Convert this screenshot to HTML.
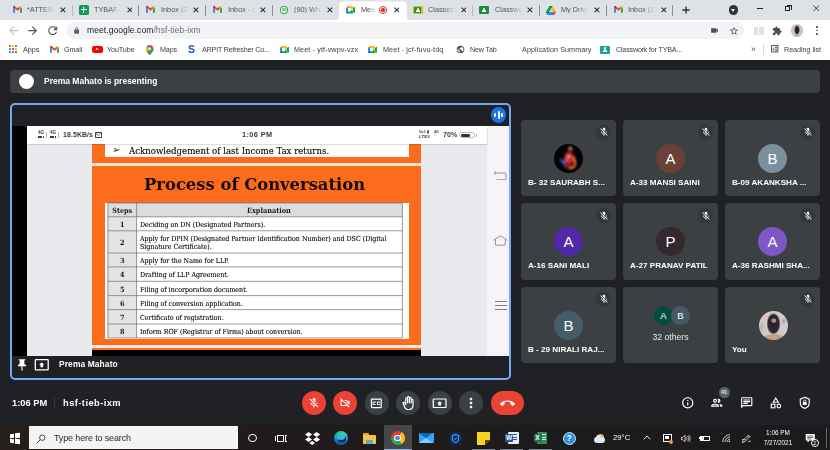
<!DOCTYPE html>
<html lang="en">
<head>
<meta charset="utf-8">
<title>Meet</title>
<style>
*{box-sizing:border-box;margin:0;padding:0}
html,body{width:830px;height:450px;overflow:hidden;background:#202124}
body{position:relative;font-family:"Liberation Sans",sans-serif;color:#fff;-webkit-font-smoothing:antialiased}
.a{position:absolute}
.t{position:absolute;white-space:nowrap;line-height:1;will-change:transform}
/* chrome */
#tabbar{left:0;top:0;width:830px;height:20px;background:#dee1e6}
#toolbar{left:0;top:20px;width:830px;height:20px;background:#fff}
#bmbar{left:0;top:40px;width:830px;height:20px;background:#fff}
.tabt{font-size:7.3px;color:#4a4d51;top:6px}
.tsep{width:1px;height:11px;top:5px;background:#8a8d91}
.tx{font-size:8px;color:#33363a;top:5px;font-weight:bold}
.bm{font-size:7.4px;color:#3c4043;top:46px}
/* meet */
#banner{left:10px;top:70px;width:810px;height:23px;background:#3c4043;border-radius:4px}
#frame{left:10px;top:103px;width:501px;height:276.5px;border:2px solid #7aa7f3;border-radius:5px;background:#202124;overflow:hidden}
.tile{width:95px;height:76px;background:#3c4043;border-radius:4px}
.nm{font-weight:bold;font-size:8.1px;color:#fff;left:7.3px;top:58.5px}
.av{width:29px;height:29px;border-radius:50%;left:33px;top:23.700px;text-align:center;font-size:15px;line-height:29px;color:#fff}
.mu{width:15px;height:15px;border-radius:50%;background:#34363a;left:75px;top:4.8px}
.cb{width:24px;height:24px;border-radius:50%;background:#3c4043;top:391px}
.red{background:#ea4335}
/* slide */
.sf{font-family:"DejaVu Serif Condensed","DejaVu Serif",serif;color:#1a1a1a}
.row{left:97px;width:295.5px;border-top:1px solid #666;background:#fff}
.row i{position:absolute;left:0;top:0;bottom:0;width:29.5px;background:#e4e4e4;border-right:1px solid #666;font-style:normal;font-weight:bold;text-align:center;font-size:7.5px}
.rt2{text-shadow:0 0 0.3px rgba(0,0,0,.55)}
/* taskbar */
#taskbar{left:0;top:425px;width:830px;height:25px;background:linear-gradient(90deg,#261e1a 0,#1f1b1b 40%,#1b1a1c 100%)}
#search{left:29px;top:426px;width:209px;height:23px;background:#f4f4f4}
</style>
</head>
<body>
<!-- ===== Browser chrome ===== -->
<div class="a" id="tabbar"></div>
<div class="a" id="toolbar"></div>
<div class="a" id="bmbar"></div>
<svg class="a" style="left:12.5px;top:6.4px" width="9" height="6.75" viewBox="0 0 24 18"><path fill="#4285f4" d="M0 3v13.500C0 17.330.67 18 1.500 18H5.500V7.500L0 3z"/><path fill="#34a853" d="M18.500 18h4c.83 0 1.500-.67 1.500-1.500V3l-5.500 4.500V18z"/><path fill="#ea4335" d="M5.500 7.500V1.200L12 6.300l6.500-5.100v6.300L12 12.500z"/><path fill="#c5221f" d="M0 2.400V3l5.500 4.500V1.200L3.600.1C2.100-.9 0 .3 0 2.400z"/><path fill="#fbbc04" d="M24 2.400V3l-5.500 4.500V1.200L20.400.1C21.900-.9 24 .3 24 2.400z"/></svg>
<div class="t tabt" style="left:27.2px;width:30px;overflow:hidden;color:#50545a;-webkit-mask-image:linear-gradient(90deg,#000 50%,transparent 92%)">*ATTENC</div>
<svg class="a" style="left:59.8px;top:7.100px" width="5.800" height="5.800" viewBox="0 0 10 10"><path d="M1 1l8 8M9 1l-8 8" stroke="#2d3034" stroke-width="1.900" fill="none"/></svg>
<div class="a tsep" style="left:71.5px;background:#b9bcc1"></div>
<div class="a" style="left:78.5px;top:5px;width:10.500px;height:10px;border-radius:1.500px;background:#0f9d58"><div class="a" style="left:2.200px;top:4.300px;width:6.100px;height:1.100px;background:#fff"></div><div class="a" style="left:4.400px;top:2.200px;width:1.100px;height:5.800px;background:#fff"></div></div>
<div class="t tabt" style="left:94.0px;width:30px;overflow:hidden;color:#50545a;-webkit-mask-image:linear-gradient(90deg,#000 50%,transparent 92%)">TYBAF-A</div>
<svg class="a" style="left:126.6px;top:7.100px" width="5.800" height="5.800" viewBox="0 0 10 10"><path d="M1 1l8 8M9 1l-8 8" stroke="#2d3034" stroke-width="1.900" fill="none"/></svg>
<div class="a tsep" style="left:138.3px;background:#8a8d91"></div>
<svg class="a" style="left:146.1px;top:6.4px" width="9" height="6.75" viewBox="0 0 24 18"><path fill="#4285f4" d="M0 3v13.500C0 17.330.67 18 1.500 18H5.500V7.500L0 3z"/><path fill="#34a853" d="M18.500 18h4c.83 0 1.500-.67 1.500-1.500V3l-5.500 4.500V18z"/><path fill="#ea4335" d="M5.500 7.500V1.200L12 6.300l6.500-5.100v6.300L12 12.500z"/><path fill="#c5221f" d="M0 2.400V3l5.500 4.500V1.200L3.600.1C2.100-.9 0 .3 0 2.400z"/><path fill="#fbbc04" d="M24 2.400V3l-5.500 4.500V1.200L20.400.1C21.900-.9 24 .3 24 2.400z"/></svg>
<div class="t tabt" style="left:160.8px;width:30px;overflow:hidden;color:#50545a;-webkit-mask-image:linear-gradient(90deg,#000 50%,transparent 92%)">Inbox (2(</div>
<svg class="a" style="left:193.4px;top:7.100px" width="5.800" height="5.800" viewBox="0 0 10 10"><path d="M1 1l8 8M9 1l-8 8" stroke="#2d3034" stroke-width="1.900" fill="none"/></svg>
<div class="a tsep" style="left:205.0px;background:#8a8d91"></div>
<svg class="a" style="left:212.8px;top:6.4px" width="9" height="6.75" viewBox="0 0 24 18"><path fill="#4285f4" d="M0 3v13.500C0 17.330.67 18 1.500 18H5.500V7.500L0 3z"/><path fill="#34a853" d="M18.500 18h4c.83 0 1.500-.67 1.500-1.500V3l-5.500 4.500V18z"/><path fill="#ea4335" d="M5.500 7.500V1.200L12 6.300l6.500-5.100v6.300L12 12.500z"/><path fill="#c5221f" d="M0 2.400V3l5.500 4.500V1.200L3.600.1C2.100-.9 0 .3 0 2.400z"/><path fill="#fbbc04" d="M24 2.400V3l-5.500 4.500V1.200L20.400.1C21.900-.9 24 .3 24 2.400z"/></svg>
<div class="t tabt" style="left:227.5px;width:30px;overflow:hidden;color:#50545a;-webkit-mask-image:linear-gradient(90deg,#000 50%,transparent 92%)">Inbox - s</div>
<svg class="a" style="left:260.1px;top:7.100px" width="5.800" height="5.800" viewBox="0 0 10 10"><path d="M1 1l8 8M9 1l-8 8" stroke="#2d3034" stroke-width="1.900" fill="none"/></svg>
<div class="a tsep" style="left:271.8px;background:#8a8d91"></div>
<div class="a" style="left:279.9px;top:5.8px;width:8.400px;height:8.400px;border-radius:50%;background:#1fb141"><div class="a" style="left:1.300px;top:1.300px;width:5.800px;height:5.800px;border-radius:50%;background:#fff"></div><div class="t" style="left:1.800px;top:2.300px;font-size:4px;font-weight:bold;color:#159a36">90</div></div>
<div class="t tabt" style="left:294.3px;width:30px;overflow:hidden;color:#50545a;-webkit-mask-image:linear-gradient(90deg,#000 50%,transparent 92%)">(90) Wha</div>
<svg class="a" style="left:326.9px;top:7.100px" width="5.800" height="5.800" viewBox="0 0 10 10"><path d="M1 1l8 8M9 1l-8 8" stroke="#2d3034" stroke-width="1.900" fill="none"/></svg>
<svg class="a" style="left:336.1px;top:1px" width="73.8" height="19" viewBox="0 0 73.8 19"><path fill="#fff" d="M0 19 Q3 19 3 15.500 V4.500 Q3 0.500 7 0.500 H66.8 Q70.8 0.500 70.8 4.500 V15.500 Q70.8 19 73.8 19 Z"/></svg>
<svg class="a" style="left:346.3px;top:6.1px" width="9.2" height="7.543999999999999" viewBox="0 0 24 20"><path fill="#00832d" d="M17 10l2.300 2.700 3.200 2V3.600l-3.200 2.500z"/><path fill="#0066da" d="M0 14.500V18c0 1.100.9 2 2 2h3.500l.7-2.700-.7-2.800-2.700-.8z"/><path fill="#e94235" d="M5.500 0L0 5.500l2.800.8 2.700-.8.800-2.600z"/><path fill="#2684fc" d="M0 5.500h5.500v9H0z"/><path fill="#00ac47" d="M22.700 2.300L19 5.400v10.100l3.700 3c.6.400 1.300 0 1.300-.7V3c0-.7-.8-1.100-1.300-.7zM13 10v4.500H5.500V20H17c1.100 0 2-.9 2-2v-3.500z"/><path fill="#ffba00" d="M17 0H5.500v5.500H13V10l6-4.900V2c0-1.100-.9-2-2-2z"/></svg>
<div class="t tabt" style="left:361.1px;width:16px;overflow:hidden;color:#45494e;-webkit-mask-image:linear-gradient(90deg,#000 45%,transparent 95%)">Meet</div>
<div class="a" style="left:378.8px;top:5.900px;width:8px;height:8px;border-radius:50%;border:1px solid #d93025"><div class="a" style="left:1.200px;top:1.200px;width:3.600px;height:3.600px;border-radius:50%;background:#d93025"></div></div>
<svg class="a" style="left:393.7px;top:7.100px" width="5.800" height="5.800" viewBox="0 0 10 10"><path d="M1 1l8 8M9 1l-8 8" stroke="#2d3034" stroke-width="1.900" fill="none"/></svg>
<div class="a" style="left:412.7px;top:6.1px;width:10px;height:7.800px;border-radius:1px;background:#f4b400"><div class="a" style="left:1.200px;top:1.200px;width:7.600px;height:5.400px;background:#0f9d58"></div><div class="a" style="left:4px;top:2px;width:2px;height:2px;border-radius:50%;background:#fff"></div><div class="a" style="left:3px;top:4.300px;width:4px;height:1.500px;border-radius:1px 1px 0 0;background:#fff"></div></div>
<div class="t tabt" style="left:427.9px;width:30px;overflow:hidden;color:#50545a;-webkit-mask-image:linear-gradient(90deg,#000 50%,transparent 92%)">Classes</div>
<svg class="a" style="left:460.5px;top:7.100px" width="5.800" height="5.800" viewBox="0 0 10 10"><path d="M1 1l8 8M9 1l-8 8" stroke="#2d3034" stroke-width="1.900" fill="none"/></svg>
<div class="a tsep" style="left:472.1px;background:#b9bcc1"></div>
<div class="a" style="left:479.4px;top:6.1px;width:10px;height:7.800px;border-radius:1px;background:#1e8e3e"><div class="a" style="left:1.200px;top:1.200px;width:7.600px;height:5.400px;background:#1e8e3e"></div><div class="a" style="left:4px;top:2px;width:2px;height:2px;border-radius:50%;background:#fff"></div><div class="a" style="left:3px;top:4.300px;width:4px;height:1.500px;border-radius:1px 1px 0 0;background:#fff"></div></div>
<div class="t tabt" style="left:494.6px;width:30px;overflow:hidden;color:#50545a;-webkit-mask-image:linear-gradient(90deg,#000 50%,transparent 92%)">Classwor</div>
<svg class="a" style="left:527.2px;top:7.100px" width="5.800" height="5.800" viewBox="0 0 10 10"><path d="M1 1l8 8M9 1l-8 8" stroke="#2d3034" stroke-width="1.900" fill="none"/></svg>
<div class="a tsep" style="left:538.9px;background:#8a8d91"></div>
<svg class="a" style="left:546.2px;top:5.6px" width="10" height="9" viewBox="0 0 24 21"><path fill="#0066da" d="M1.800 18l1.100 1.900c.2.400.5.700.9.900L7.600 14H0c0 .4.100.9.300 1.300z"/><path fill="#00ac47" d="M12 6.700L8.200 0c-.4.200-.7.500-.9.900L.3 12.700c-.2.400-.3.800-.3 1.300h7.600z"/><path fill="#ea4335" d="M20.200 20.800c.4-.2.700-.5.900-.9l.5-.8 2.100-3.800c.2-.4.300-.8.300-1.300h-7.600l1.600 3.200z"/><path fill="#00832d" d="M12 6.700L15.800 0c-.4-.2-.8-.3-1.300-.3H9.500c-.5 0-.9.100-1.300.3z"/><path fill="#2684fc" d="M16.400 14H7.600l-3.800 6.800c.4.200.8.300 1.300.3h13.800c.5 0 .9-.1 1.300-.3z"/><path fill="#ffba00" d="M20.100 7.100L16.700.9c-.2-.4-.5-.7-.9-.9L12 6.700 16.400 14H24c0-.4-.1-.9-.3-1.300z"/></svg>
<div class="t tabt" style="left:561.4px;width:30px;overflow:hidden;color:#50545a;-webkit-mask-image:linear-gradient(90deg,#000 50%,transparent 92%)">My Drive</div>
<svg class="a" style="left:594.0px;top:7.100px" width="5.800" height="5.800" viewBox="0 0 10 10"><path d="M1 1l8 8M9 1l-8 8" stroke="#2d3034" stroke-width="1.900" fill="none"/></svg>
<div class="a tsep" style="left:605.7px;background:#8a8d91"></div>
<svg class="a" style="left:613.5px;top:6.4px" width="9" height="6.75" viewBox="0 0 24 18"><path fill="#4285f4" d="M0 3v13.500C0 17.330.67 18 1.500 18H5.500V7.500L0 3z"/><path fill="#34a853" d="M18.500 18h4c.83 0 1.500-.67 1.500-1.500V3l-5.500 4.500V18z"/><path fill="#ea4335" d="M5.500 7.500V1.200L12 6.300l6.500-5.100v6.300L12 12.500z"/><path fill="#c5221f" d="M0 2.400V3l5.500 4.500V1.200L3.600.1C2.100-.9 0 .3 0 2.400z"/><path fill="#fbbc04" d="M24 2.400V3l-5.500 4.500V1.200L20.400.1C21.900-.9 24 .3 24 2.400z"/></svg>
<div class="t tabt" style="left:628.2px;width:30px;overflow:hidden;color:#50545a;-webkit-mask-image:linear-gradient(90deg,#000 50%,transparent 92%)">Inbox (1(</div>
<svg class="a" style="left:660.8px;top:7.100px" width="5.800" height="5.800" viewBox="0 0 10 10"><path d="M1 1l8 8M9 1l-8 8" stroke="#2d3034" stroke-width="1.900" fill="none"/></svg>
<div class="a tsep" style="left:672.4px"></div>
<svg class="a" style="left:682px;top:6px" width="8" height="8" viewBox="0 0 10 10"><path d="M5 0.500v9M0.500 5h9" stroke="#2d3034" stroke-width="1.700" fill="none"/></svg>
<div class="a" style="left:728.500px;top:5.300px;width:9.600px;height:9.600px;border-radius:50%;background:#2f3237"><div class="a" style="left:2.300px;top:3.800px;width:0;height:0;border-left:2.500px solid transparent;border-right:2.500px solid transparent;border-top:3px solid #fff"></div></div>
<div class="a" style="left:757.400px;top:8px;width:6px;height:1px;background:#222"></div>
<div class="a" style="left:785.400px;top:6.400px;width:5px;height:5px;border:1px solid #222"></div><div class="a" style="left:786.900px;top:5px;width:5px;height:5px;border-top:1px solid #222;border-right:1px solid #222"></div>
<svg class="a" style="left:812.800px;top:5px" width="6.500" height="6.500" viewBox="0 0 10 10"><path d="M0.500 0.500l9 9M9.500 0.500l-9 9" stroke="#222" stroke-width="1.300" fill="none"/></svg>
<svg class="a" style="left:6.800px;top:23.900px" width="13.300" height="13.300" viewBox="0 0 24 24"><path fill="#bdc1c6" d="M20 11H7.830l5.590-5.590L12 4l-8 8 8 8 1.410-1.410L7.830 13H20v-2z"/></svg>
<svg class="a" style="left:26.200px;top:23.900px" width="13.300" height="13.300" viewBox="0 0 24 24"><path fill="#4d5156" d="M12 4l-1.410 1.410L16.170 11H4v2h12.170l-5.580 5.590L12 20l8-8z"/></svg>
<svg class="a" style="left:45.800px;top:23.600px" width="13.400" height="13.400" viewBox="0 0 24 24"><path fill="#4d5156" d="M17.650 6.350C16.200 4.900 14.210 4 12 4c-4.420 0-7.990 3.580-7.990 8s3.570 8 7.990 8c3.730 0 6.840-2.550 7.730-6h-2.080c-.82 2.330-3.040 4-5.650 4-3.310 0-6-2.690-6-6s2.690-6 6-6c1.660 0 3.140.69 4.220 1.780L13 11h7V4l-2.350 2.350z"/></svg>
<div class="a" style="left:66.300px;top:22px;width:678px;height:16.500px;border-radius:8.250px;background:#f1f3f4"></div>
<svg class="a" style="left:72.800px;top:26.500px" width="7.300" height="7.300" viewBox="0 0 24 24"><path fill="#5f6368" d="M18 8h-1V6c0-2.760-2.240-5-5-5S7 3.240 7 6v2H6c-1.100 0-2 .9-2 2v10c0 1.100.9 2 2 2h12c1.100 0 2-.9 2-2V10c0-1.100-.9-2-2-2zM9 6c0-1.660 1.340-3 3-3s3 1.340 3 3v2H9V6z"/></svg>
<div class="t" style="left:86.700px;top:26px;font-size:8.500px;color:#202124;letter-spacing:0.080px">meet.google.com<span style="color:#6b6f74">/hsf-tieb-ixm</span></div>
<svg class="a" style="left:709.700px;top:26px" width="9" height="9" viewBox="0 0 24 24"><path fill="#4d5156" d="M17 10.500V7c0-.55-.45-1-1-1H4c-.55 0-1 .45-1 1v10c0 .55.45 1 1 1h12c.55 0 1-.45 1-1v-3.500l4 4v-11l-4 4z"/></svg>
<svg class="a" style="left:729px;top:25.500px" width="10" height="10" viewBox="0 0 24 24"><path fill="#4d5156" d="M22 9.240l-7.190-.62L12 2 9.190 8.630 2 9.240l5.460 4.730L5.820 21 12 17.270 18.180 21l-1.630-7.030L22 9.240zM12 15.400l-3.760 2.270 1-4.280-3.320-2.880 4.380-.38L12 6.100l1.710 4.040 4.380.38-3.320 2.880 1 4.280L12 15.400z"/></svg>
<div class="a" style="left:753.500px;top:26.500px;width:4.500px;height:8px;background:#dfe1e5"></div><div class="a" style="left:759px;top:26.500px;width:4.500px;height:8px;background:#dfe1e5"></div>
<svg class="a" style="left:772px;top:25.500px" width="10" height="10" viewBox="0 0 24 24"><path fill="#4d5156" d="M20.500 11H19V7c0-1.100-.9-2-2-2h-4V3.500C13 2.120 11.880 1 10.500 1S8 2.120 8 3.500V5H4c-1.100 0-1.990.9-1.990 2v3.800H3.500c1.490 0 2.700 1.210 2.700 2.700s-1.210 2.700-2.700 2.700H2V20c0 1.100.9 2 2 2h3.800v-1.500c0-1.490 1.210-2.700 2.700-2.700 1.490 0 2.700 1.210 2.700 2.700V22H17c1.100 0 2-.9 2-2v-4h1.500c1.380 0 2.500-1.120 2.500-2.500S21.880 11 20.500 11z"/></svg>
<div class="a" style="left:790.700px;top:24.200px;width:12.600px;height:12.600px;border-radius:50%;background:radial-gradient(ellipse 24% 38% at 50% 46%,#2a242c 0,#332b33 70%,rgba(51,43,51,0) 100%),radial-gradient(ellipse 36% 12% at 50% 92%,#c59a78 0,rgba(197,154,120,0) 100%),#cfc3c0"></div>
<div class="a" style="left:816.200px;top:26.3px;width:1.700px;height:1.700px;border-radius:50%;background:#4d5156"></div>
<div class="a" style="left:816.200px;top:29.6px;width:1.700px;height:1.700px;border-radius:50%;background:#4d5156"></div>
<div class="a" style="left:816.200px;top:32.9px;width:1.700px;height:1.700px;border-radius:50%;background:#4d5156"></div>
<div class="t bm" style="left:23px;font-size:7.2px;letter-spacing:-0.026px;top:46.100px">Apps</div>
<div class="t bm" style="left:63.9px;font-size:7.2px;letter-spacing:-0.138px;top:46.100px">Gmail</div>
<div class="t bm" style="left:107px;font-size:7.2px;letter-spacing:-0.095px;top:46.100px">YouTube</div>
<div class="t bm" style="left:159.6px;font-size:7.2px;letter-spacing:-0.123px;top:46.100px">Maps</div>
<div class="t bm" style="left:202px;font-size:7.2px;letter-spacing:-0.205px;top:46.100px">ARPIT Refresher Co...</div>
<div class="t bm" style="left:294.2px;font-size:7.2px;letter-spacing:0.119px;top:46.100px">Meet - ytf-vwpv-vzx</div>
<div class="t bm" style="left:383px;font-size:7.2px;letter-spacing:0.134px;top:46.100px">Meet - jcf-fuvu-tdq</div>
<div class="t bm" style="left:470px;font-size:7.2px;letter-spacing:-0.192px;top:46.100px">New Tab</div>
<div class="t bm" style="left:521.5px;font-size:7.2px;letter-spacing:0.081px;top:46.100px">Application Summary</div>
<div class="t bm" style="left:615.8px;font-size:7.2px;letter-spacing:-0.210px;top:46.100px">Classwork for TYBA...</div>
<div class="t bm" style="left:784.3px;font-size:7.2px;letter-spacing:-0.040px;top:46.100px">Reading list</div>
<div class="a" style="left:9.00px;top:45.00px;width:2.100px;height:2.100px;border-radius:0.600px;background:#ea4335"></div><div class="a" style="left:12.05px;top:45.00px;width:2.100px;height:2.100px;border-radius:0.600px;background:#fbbc04"></div><div class="a" style="left:15.10px;top:45.00px;width:2.100px;height:2.100px;border-radius:0.600px;background:#34a853"></div><div class="a" style="left:9.00px;top:48.05px;width:2.100px;height:2.100px;border-radius:0.600px;background:#4285f4"></div><div class="a" style="left:12.05px;top:48.05px;width:2.100px;height:2.100px;border-radius:0.600px;background:#ea4335"></div><div class="a" style="left:15.10px;top:48.05px;width:2.100px;height:2.100px;border-radius:0.600px;background:#fbbc04"></div><div class="a" style="left:9.00px;top:51.10px;width:2.100px;height:2.100px;border-radius:0.600px;background:#34a853"></div><div class="a" style="left:12.05px;top:51.10px;width:2.100px;height:2.100px;border-radius:0.600px;background:#4285f4"></div><div class="a" style="left:15.10px;top:51.10px;width:2.100px;height:2.100px;border-radius:0.600px;background:#ea4335"></div>
<svg class="a" style="left:49.5px;top:46px" width="9" height="6.75" viewBox="0 0 24 18"><path fill="#4285f4" d="M0 3v13.500C0 17.330.67 18 1.500 18H5.500V7.500L0 3z"/><path fill="#34a853" d="M18.500 18h4c.83 0 1.500-.67 1.500-1.500V3l-5.500 4.500V18z"/><path fill="#ea4335" d="M5.500 7.500V1.200L12 6.300l6.500-5.100v6.300L12 12.500z"/><path fill="#c5221f" d="M0 2.400V3l5.500 4.500V1.200L3.600.1C2.100-.9 0 .3 0 2.400z"/><path fill="#fbbc04" d="M24 2.400V3l-5.500 4.500V1.200L20.400.1C21.900-.9 24 .3 24 2.400z"/></svg>
<div class="a" style="left:92px;top:46px;width:10.500px;height:7.400px;border-radius:2px;background:#f00"><div class="a" style="left:4px;top:2px;width:0;height:0;border-top:1.700px solid transparent;border-bottom:1.700px solid transparent;border-left:3px solid #fff"></div></div>
<svg class="a" style="left:146px;top:44.500px" width="7.500" height="10" viewBox="0 0 18 24"><path fill="#ea4335" d="M9 0C4 0 0 4 0 9c0 6.500 9 15 9 15s9-8.500 9-15c0-5-4-9-9-9z"/><path fill="#4285f4" d="M9 0C6.500 0 4.200 1 2.600 2.700L9 9z"/><path fill="#fbbc04" d="M0 9c0 2.200 1 4.600 2.300 6.900L9 9 2.600 2.700C1 4.300 0 6.500 0 9z"/><path fill="#34a853" d="M9 9l-6.700 6.900C4.600 20 9 24 9 24s9-8.500 9-15z" opacity=".95"/><circle cx="9" cy="9" r="3.200" fill="#fff"/></svg>
<div class="t" style="left:188.300px;top:44.300px;font-size:10.500px;font-weight:bold;color:#1a56c4">S</div>
<svg class="a" style="left:279.5px;top:46px" width="9" height="7.38" viewBox="0 0 24 20"><path fill="#00832d" d="M17 10l2.300 2.700 3.200 2V3.600l-3.200 2.500z"/><path fill="#0066da" d="M0 14.500V18c0 1.100.9 2 2 2h3.500l.7-2.700-.7-2.800-2.700-.8z"/><path fill="#e94235" d="M5.500 0L0 5.500l2.800.8 2.700-.8.800-2.600z"/><path fill="#2684fc" d="M0 5.500h5.500v9H0z"/><path fill="#00ac47" d="M22.700 2.300L19 5.400v10.100l3.700 3c.6.400 1.300 0 1.300-.7V3c0-.7-.8-1.100-1.300-.7zM13 10v4.500H5.500V20H17c1.100 0 2-.9 2-2v-3.500z"/><path fill="#ffba00" d="M17 0H5.500v5.500H13V10l6-4.900V2c0-1.100-.9-2-2-2z"/></svg>
<svg class="a" style="left:368px;top:46px" width="9" height="7.38" viewBox="0 0 24 20"><path fill="#00832d" d="M17 10l2.300 2.700 3.200 2V3.600l-3.200 2.500z"/><path fill="#0066da" d="M0 14.500V18c0 1.100.9 2 2 2h3.500l.7-2.700-.7-2.800-2.700-.8z"/><path fill="#e94235" d="M5.500 0L0 5.500l2.800.8 2.700-.8.800-2.600z"/><path fill="#2684fc" d="M0 5.500h5.500v9H0z"/><path fill="#00ac47" d="M22.700 2.300L19 5.400v10.100l3.700 3c.6.400 1.300 0 1.300-.7V3c0-.7-.8-1.100-1.300-.7zM13 10v4.500H5.500V20H17c1.100 0 2-.9 2-2v-3.500z"/><path fill="#ffba00" d="M17 0H5.500v5.500H13V10l6-4.900V2c0-1.100-.9-2-2-2z"/></svg>
<svg class="a" style="left:455.500px;top:45px" width="9" height="9" viewBox="0 0 24 24"><circle cx="12" cy="12" r="10" fill="#4d5156"/><path fill="#fff" d="M11 19.930c-3.950-.49-7-3.850-7-7.930 0-.62.080-1.210.21-1.790L9 15v1c0 1.100.9 2 2 2v1.930zm6.900-2.540c-.26-.81-1-1.390-1.900-1.390h-1v-3c0-.55-.45-1-1-1H8v-2h2c.55 0 1-.45 1-1V7h2c1.100 0 2-.9 2-2v-.41c2.930 1.190 5 4.060 5 7.410 0 2.080-.8 3.970-2.100 5.390z"/></svg>
<div class="a" style="left:600px;top:45.500px;width:10px;height:8px;border-radius:1px;background:#1aa3a3"><div class="a" style="left:3.800px;top:1.800px;width:2.400px;height:2.400px;border-radius:50%;background:#fff"></div><div class="a" style="left:2.800px;top:4.600px;width:4.400px;height:1.600px;border-radius:1px 1px 0 0;background:#fff"></div></div>
<div class="t" style="left:751px;top:44.500px;font-size:8.500px;color:#4d5156">»</div>
<div class="a" style="left:763px;top:44px;width:1px;height:11px;background:#d5d7da"></div>
<div class="a" style="left:770.500px;top:45.300px;width:8px;height:8px;border:1px solid #4d5156;transform-origin:0 0;transform:scale(.92)"><div class="a" style="left:1px;top:1.500px;width:1px;height:3.500px;background:#4d5156"></div><div class="a" style="left:3px;top:1.200px;width:3px;height:0.900px;background:#4d5156"></div><div class="a" style="left:3px;top:2.900px;width:3px;height:0.900px;background:#4d5156"></div><div class="a" style="left:3px;top:4.600px;width:3px;height:0.900px;background:#4d5156"></div></div>

<!-- ===== Meet ===== -->
<div class="a" id="banner"><div class="a" style="left:9.100px;top:3.900px;width:15px;height:15px;border-radius:50%;background:#fff"></div><div class="t" style="left:34px;top:7px;font-size:8.5px;font-weight:bold">Prema Mahato is presenting</div></div>
<div class="a" id="frame">
<div class="a" style="left:0;top:21px;width:15px;height:230px;background:#000"></div>

<div class="a" style="left:15px;top:38px;width:460px;height:213px;background:#e9eaee"></div>
<div class="a" style="left:475px;top:21px;width:22px;height:230px;background:#f5f5f8"></div>
<div class="a" style="left:80px;top:38px;width:329px;height:207px;background:#fb6d1d"></div>
<div class="a" style="left:92.500px;top:38px;width:304.200px;height:14.300px;background:#fff"></div>
<div class="a" style="left:80px;top:57.700px;width:329px;height:3.800px;background:#fce4d6"></div>
<div class="a" style="left:80px;top:240px;width:329px;height:3px;background:#fce8de"></div>
<div class="a" style="left:80px;top:245px;width:329px;height:6px;background:#000"></div>
<div class="a" style="left:15px;top:21px;width:460px;height:18px;background:#fff;box-shadow:0 0.5px 1.5px rgba(0,0,0,.35)"></div>
<div class="t" style="left:26.200px;top:25.500px;font-size:4.700px;font-weight:bold;color:#3c3c3c;letter-spacing:-0.2px">4G</div>
<div class="a" style="left:26.1px;top:31.3px;width:1.600px;height:1.800px;background:#3c3c3c"></div>
<div class="a" style="left:28.3px;top:31.3px;width:1.600px;height:1.800px;background:#3c3c3c"></div>
<div class="a" style="left:30.5px;top:31.3px;width:1.600px;height:1.800px;background:#3c3c3c"></div>
<div class="a" style="left:34.4px;top:26.5px;width:0.600px;height:6.500px;background:#bbb"></div>
<div class="t" style="left:38.200px;top:25.500px;font-size:4.700px;font-weight:bold;color:#3c3c3c;letter-spacing:-0.2px">4G</div>
<div class="a" style="left:38.1px;top:31.3px;width:1.600px;height:1.800px;background:#3c3c3c"></div>
<div class="a" style="left:40.3px;top:31.3px;width:1.600px;height:1.800px;background:#3c3c3c"></div>
<div class="a" style="left:42.5px;top:31.3px;width:1.600px;height:1.800px;background:#3c3c3c"></div>
<div class="a" style="left:46.4px;top:26.5px;width:0.600px;height:6.500px;background:#bbb"></div>
<div class="t" style="left:50.8px;top:26.6px;font-size:6.9px;font-weight:bold;color:#3c3c3c;letter-spacing:0.12px">18.5KB/s</div>
<div class="a" style="left:83.3px;top:27.1px;width:6.500px;height:5.700px;border:1px solid #3c3c3c;border-radius:0.800px"><svg class="a" style="left:0;top:0" width="4.500" height="3.700" viewBox="0 0 9 7"><path d="M0 0.500L4.500 4.500L9 0.500" fill="none" stroke="#3c3c3c" stroke-width="1.600"/></svg></div>
<div class="t" style="left:229.7px;top:26.4px;font-size:7.3px;font-weight:bold;color:#3c3c3c;letter-spacing:0.42px">1:06 PM</div>
<div class="t" style="left:407.2px;top:25.8px;font-size:3.7px;font-weight:bold;color:#3c3c3c;letter-spacing:0.1px">Vo1 ▮</div>
<div class="t" style="left:407.2px;top:29.7px;font-size:4.4px;font-weight:bold;color:#3c3c3c;letter-spacing:0.1px">LTE2</div>
<div class="t" style="left:421.6px;top:25.6px;font-size:3.7px;font-weight:bold;color:#3c3c3c;">4G</div>
<div class="t" style="left:422.0px;top:29.4px;font-size:3.4px;font-weight:bold;color:#3c3c3c;letter-spacing:-0.3px">↑↓</div>
<div class="t" style="left:431.0px;top:26.5px;font-size:7.1px;font-weight:bold;color:#3c3c3c;letter-spacing:0.1px">70%</div>
<div class="a" style="left:447.3px;top:27.4px;width:16px;height:5.800px;border:0.800px solid #b9b9b9;border-radius:2.400px;background:#fff"><div class="a" style="left:0.500px;top:0.400px;width:9.300px;height:3.400px;border-radius:1.200px;background:#333"></div></div><div class="a" style="left:463.6px;top:29.0px;width:0.900px;height:2.600px;background:#b9b9b9"></div>
<svg class="a" style="left:482.0px;top:65.5px" width="12.500" height="9.500" viewBox="0 0 25 19"><path d="M0.500 4h21.500a2 2 0 0 1 2 2v9.500a2 2 0 0 1-2 2H5" fill="none" stroke="#7d7d80" stroke-width="1.700"/><path d="M4 0.500L0.500 4L4 7.500" fill="none" stroke="#7d7d80" stroke-width="1.500"/></svg>
<svg class="a" style="left:480.8px;top:130.0px" width="14.800" height="11" viewBox="0 0 30 22"><path d="M1 10.500L15 1.500L29 10.500" fill="none" stroke="#7d7d80" stroke-width="1.700"/><path d="M5 9v9.500a2 2 0 0 0 2 2h16a2 2 0 0 0 2-2V9" fill="none" stroke="#7d7d80" stroke-width="1.700"/></svg>
<div class="a" style="left:483.100px;top:195.700px;width:11.500px;height:0.900px;background:#7d7d80"></div>
<div class="a" style="left:483.100px;top:199.700px;width:11.500px;height:0.900px;background:#7d7d80"></div>
<div class="a" style="left:483.100px;top:203.700px;width:11.500px;height:0.900px;background:#7d7d80"></div>
<div class="t sf" style="left:100.3px;top:39.600px;font-size:9.500px;color:#222">➢</div>
<div class="t sf rt2" style="left:117.400px;top:40.500px;font-size:9.550px">Acknowledgement of last Income Tax returns.</div>
<div class="t" style="left:131.700px;top:71.500px;font-family:'DejaVu Serif',serif;font-weight:bold;font-size:16.4px;color:#160b06">Process of Conversation</div>
<div class="a" style="left:92.700px;top:98.300px;width:304.300px;height:136.1px;background:#fefefe"></div>
<svg class="a" style="left:94.8px;top:97.4px" width="296.4" height="137.0" viewBox="-1 -1 296.4 137.0"><rect x="0" y="0" width="294.4" height="135.0" fill="#fff"/><rect x="0" y="0" width="28.6" height="135.0" fill="#e4e4e4"/><rect x="0" y="0" width="294.4" height="13.8" fill="#dcdcdc"/><path d="M0 0.0H294.4M0 13.8H294.4M0 27.8H294.4M0 50.0H294.4M0 63.9H294.4M0 78.3H294.4M0 92.6H294.4M0 106.6H294.4M0 121.0H294.4M0 135.0H294.4M0 0V135.0M28.6 0V135.0M294.4 0V135.0" fill="none" stroke="#6e6e6e" stroke-width="0.700"/></svg>
<div class="t sf" style="left:95.8px;width:28.6px;text-align:center;top:101.8px;font-size:7.2px;font-weight:bold">Steps</div>
<div class="t sf" style="left:124.4px;width:265.8px;text-align:center;top:101.8px;font-size:7.3px;font-weight:bold">Explanation</div>
<div class="t sf" style="left:95.8px;width:28.6px;text-align:center;top:116.0px;font-size:7.2px;font-weight:bold">1</div>
<div class="t sf rt2" style="left:127.8px;top:115.8px;font-size:7px;line-height:8.3px">Deciding on DN (Designated Partners).</div>
<div class="t sf" style="left:95.8px;width:28.6px;text-align:center;top:134.1px;font-size:7.2px;font-weight:bold">2</div>
<div class="t sf rt2" style="left:127.8px;top:129.8px;font-size:7px;line-height:8.3px">Apply for DPIN (Designated Partner Identification Number) and DSC (Digital<br>Signature Certificate).</div>
<div class="t sf" style="left:95.8px;width:28.6px;text-align:center;top:152.2px;font-size:7.2px;font-weight:bold">3</div>
<div class="t sf rt2" style="left:127.8px;top:152.0px;font-size:7px;line-height:8.3px">Apply for the Name for LLP.</div>
<div class="t sf" style="left:95.8px;width:28.6px;text-align:center;top:166.3px;font-size:7.2px;font-weight:bold">4</div>
<div class="t sf rt2" style="left:127.8px;top:166.2px;font-size:7px;line-height:8.3px">Drafting of LLP Agreement.</div>
<div class="t sf" style="left:95.8px;width:28.6px;text-align:center;top:180.7px;font-size:7.2px;font-weight:bold">5</div>
<div class="t sf rt2" style="left:127.8px;top:180.5px;font-size:7px;line-height:8.3px">Filing of incorporation document.</div>
<div class="t sf" style="left:95.8px;width:28.6px;text-align:center;top:194.8px;font-size:7.2px;font-weight:bold">6</div>
<div class="t sf rt2" style="left:127.8px;top:194.7px;font-size:7px;line-height:8.3px">Filing of conversion application.</div>
<div class="t sf" style="left:95.8px;width:28.6px;text-align:center;top:209.0px;font-size:7.2px;font-weight:bold">7</div>
<div class="t sf rt2" style="left:127.8px;top:208.8px;font-size:7px;line-height:8.3px">Certificate of registration.</div>
<div class="t sf" style="left:95.8px;width:28.6px;text-align:center;top:223.2px;font-size:7.2px;font-weight:bold">8</div>
<div class="t sf rt2" style="left:127.8px;top:223.0px;font-size:7px;line-height:8.3px">Inform ROF (Registrar of Firms) about conversion.</div>
<svg class="a" style="left:3.200px;top:252.500px" width="14" height="14" viewBox="0 0 24 24"><path fill="#fff" d="M16 9V4h1c.55 0 1-.45 1-1s-.45-1-1-1H7c-.55 0-1 .45-1 1s.45 1 1 1h1v5c0 1.660-1.340 3-3 3v2h5.970v7l1 1 1-1v-7H19v-2c-1.660 0-3-1.340-3-3z"/></svg><svg class="a" style="left:21.800px;top:251.700px" width="15.500" height="15.500" viewBox="0 0 24 24"><path fill="#fff" d="M21 3H3c-1.110 0-2 .89-2 2v14c0 1.110.89 2 2 2h18c1.110 0 2-.89 2-2V5c0-1.110-.89-2-2-2zm0 16.020H3V4.980h18v14.040zM10 12H8l4-4 4 4h-2v4h-4v-4z"/></svg><div class="a" style="left:479px;top:2.400px;width:15.200px;height:15.200px;border-radius:50%;background:#1a73e8"><div class="a" style="left:3.300px;top:5.800px;width:2.200px;height:3.600px;border-radius:1.100px;background:#fff"></div><div class="a" style="left:6.500px;top:3.700px;width:2.200px;height:7.800px;border-radius:1.100px;background:#fff"></div><div class="a" style="left:9.700px;top:5.800px;width:2.200px;height:3.600px;border-radius:1.100px;background:#fff"></div></div>
<div class="t" style="left:46.500px;top:255.300px;font-size:8.400px;font-weight:bold;letter-spacing:0.130px">Prema Mahato</div>
</div>

<div class="a tile" style="left:521px;top:120px"><div class="a mu"><svg class="a" style="left:2.500px;top:2.500px" width="10" height="10" viewBox="0 0 24 24"><path fill="#fff" d="M19 11h-1.700c0 .74-.16 1.430-.43 2.050l1.230 1.230c.56-.98.9-2.090.9-3.280zm-4.020.17c0-.06.020-.11.020-.17V5c0-1.660-1.340-3-3-3S9 3.340 9 5v.18l5.980 5.990zM4.270 3L3 4.270l6.010 6.010V11c0 1.660 1.330 3 2.990 3 .22 0 .44-.03.65-.08l1.660 1.660c-.71.33-1.500.52-2.310.52-2.760 0-5.300-2.100-5.300-5.100H5c0 3.410 2.720 6.230 6 6.720V21h2v-3.280c.91-.13 1.770-.45 2.540-.9L19.730 21 21 19.730 4.270 3z"/></svg></div><div class="a av" style="background:#040306;overflow:hidden"><svg class="a" style="left:0;top:0" width="29" height="29" viewBox="0 0 29 29"><defs><filter id="bl" x="-20%" y="-20%" width="140%" height="140%"><feGaussianBlur stdDeviation="0.9"/></filter></defs><g filter="url(#bl)"><ellipse cx="16.300" cy="4.800" rx="2.600" ry="2.200" fill="#9a6a45"/><ellipse cx="15.200" cy="14" rx="5" ry="6.300" fill="#c82a1d"/><ellipse cx="14" cy="22.300" rx="4" ry="2.300" fill="#7d2216"/><path d="M19.600 13.500 C21.800 16.500 21.800 21 19.500 23.200 C18.300 24.300 17 24.400 16 24.200" fill="none" stroke="#e86e2a" stroke-width="2.300" stroke-linecap="round"/><path d="M7 15.800 L10.800 20.300" stroke="#5650c0" stroke-width="2.100" stroke-linecap="round"/><path d="M9.500 18.500 L14.800 12.800" stroke="#8d88e6" stroke-width="1.100" stroke-linecap="round"/><circle cx="14.900" cy="12.600" r="0.900" fill="#e8e6ff"/></g></svg></div><div class="t nm">B- 32 SAURABH S...</div></div>
<div class="a tile" style="left:623px;top:120px"><div class="a mu"><svg class="a" style="left:2.500px;top:2.500px" width="10" height="10" viewBox="0 0 24 24"><path fill="#fff" d="M19 11h-1.700c0 .74-.16 1.430-.43 2.050l1.230 1.230c.56-.98.9-2.090.9-3.280zm-4.020.17c0-.06.020-.11.020-.17V5c0-1.660-1.340-3-3-3S9 3.340 9 5v.18l5.980 5.990zM4.270 3L3 4.270l6.010 6.010V11c0 1.660 1.330 3 2.990 3 .22 0 .44-.03.65-.08l1.660 1.660c-.71.33-1.500.52-2.310.52-2.760 0-5.300-2.100-5.300-5.100H5c0 3.410 2.720 6.230 6 6.720V21h2v-3.280c.91-.13 1.770-.45 2.540-.9L19.730 21 21 19.730 4.270 3z"/></svg></div><div class="a av" style="background:#6a4235">A</div><div class="t nm">A-33 MANSI SAINI</div></div>
<div class="a tile" style="left:725px;top:120px"><div class="a mu"><svg class="a" style="left:2.500px;top:2.500px" width="10" height="10" viewBox="0 0 24 24"><path fill="#fff" d="M19 11h-1.700c0 .74-.16 1.430-.43 2.050l1.230 1.230c.56-.98.9-2.090.9-3.280zm-4.020.17c0-.06.020-.11.020-.17V5c0-1.660-1.340-3-3-3S9 3.340 9 5v.18l5.980 5.990zM4.270 3L3 4.270l6.010 6.010V11c0 1.660 1.330 3 2.990 3 .22 0 .44-.03.65-.08l1.660 1.660c-.71.33-1.500.52-2.310.52-2.760 0-5.300-2.100-5.300-5.100H5c0 3.410 2.720 6.230 6 6.720V21h2v-3.280c.91-.13 1.770-.45 2.540-.9L19.730 21 21 19.730 4.270 3z"/></svg></div><div class="a av" style="background:#7a909c">B</div><div class="t nm">B-09 AKANKSHA ...</div></div>
<div class="a tile" style="left:521px;top:203.300px;height:76.500px"><div class="a mu"><svg class="a" style="left:2.500px;top:2.500px" width="10" height="10" viewBox="0 0 24 24"><path fill="#fff" d="M19 11h-1.700c0 .74-.16 1.430-.43 2.050l1.230 1.230c.56-.98.9-2.090.9-3.280zm-4.020.17c0-.06.020-.11.020-.17V5c0-1.660-1.340-3-3-3S9 3.340 9 5v.18l5.980 5.990zM4.270 3L3 4.270l6.010 6.010V11c0 1.660 1.330 3 2.990 3 .22 0 .44-.03.65-.08l1.660 1.660c-.71.33-1.500.52-2.310.52-2.760 0-5.300-2.100-5.300-5.100H5c0 3.410 2.720 6.230 6 6.720V21h2v-3.280c.91-.13 1.770-.45 2.540-.9L19.730 21 21 19.730 4.270 3z"/></svg></div><div class="a av" style="background:#5028a8">A</div><div class="t nm">A-16 SANI MALI</div></div>
<div class="a tile" style="left:623px;top:203.300px;height:76.500px"><div class="a mu"><svg class="a" style="left:2.500px;top:2.500px" width="10" height="10" viewBox="0 0 24 24"><path fill="#fff" d="M19 11h-1.700c0 .74-.16 1.430-.43 2.050l1.230 1.230c.56-.98.9-2.090.9-3.280zm-4.020.17c0-.06.020-.11.020-.17V5c0-1.660-1.340-3-3-3S9 3.340 9 5v.18l5.980 5.990zM4.270 3L3 4.270l6.010 6.010V11c0 1.660 1.330 3 2.990 3 .22 0 .44-.03.65-.08l1.660 1.660c-.71.33-1.500.52-2.310.52-2.760 0-5.300-2.100-5.300-5.100H5c0 3.410 2.720 6.230 6 6.720V21h2v-3.280c.91-.13 1.770-.45 2.540-.9L19.730 21 21 19.730 4.270 3z"/></svg></div><div class="a av" style="background:#33282e">P</div><div class="t nm">A-27 PRANAV PATIL</div></div>
<div class="a tile" style="left:725px;top:203.300px;height:76.500px"><div class="a mu"><svg class="a" style="left:2.500px;top:2.500px" width="10" height="10" viewBox="0 0 24 24"><path fill="#fff" d="M19 11h-1.700c0 .74-.16 1.430-.43 2.050l1.230 1.230c.56-.98.9-2.090.9-3.280zm-4.020.17c0-.06.020-.11.020-.17V5c0-1.660-1.340-3-3-3S9 3.340 9 5v.18l5.980 5.990zM4.270 3L3 4.270l6.010 6.010V11c0 1.660 1.330 3 2.990 3 .22 0 .44-.03.65-.08l1.660 1.660c-.71.33-1.500.52-2.310.52-2.760 0-5.300-2.100-5.300-5.100H5c0 3.410 2.720 6.230 6 6.720V21h2v-3.280c.91-.13 1.770-.45 2.540-.9L19.730 21 21 19.730 4.270 3z"/></svg></div><div class="a av" style="background:#7f56c6">A</div><div class="t nm">A-36 RASHMI SHA...</div></div>
<div class="a tile" style="left:521px;top:287px"><div class="a mu"><svg class="a" style="left:2.500px;top:2.500px" width="10" height="10" viewBox="0 0 24 24"><path fill="#fff" d="M19 11h-1.700c0 .74-.16 1.430-.43 2.050l1.230 1.230c.56-.98.9-2.090.9-3.280zm-4.020.17c0-.06.020-.11.020-.17V5c0-1.660-1.340-3-3-3S9 3.340 9 5v.18l5.980 5.990zM4.270 3L3 4.270l6.010 6.010V11c0 1.660 1.330 3 2.990 3 .22 0 .44-.03.65-.08l1.660 1.660c-.71.33-1.500.52-2.310.52-2.760 0-5.300-2.100-5.300-5.100H5c0 3.410 2.720 6.230 6 6.720V21h2v-3.280c.91-.13 1.770-.45 2.540-.9L19.730 21 21 19.730 4.270 3z"/></svg></div><div class="a av" style="background:#455c6b">B</div><div class="t nm">B - 29 NIRALI RAJ...</div></div>
<div class="a tile" style="left:623px;top:287px"><div class="a" style="left:31px;top:19.300px;width:19px;height:19px;border-radius:50%;background:#004d40;text-align:center;font-size:9.5px;line-height:19px">A</div><div class="a" style="left:48px;top:19.300px;width:19px;height:19px;border-radius:50%;background:#455a64;text-align:center;font-size:9.5px;line-height:19px">B</div><div class="t" style="left:0;width:95px;text-align:center;top:45.800px;font-size:8.700px;color:#e8eaed">32 others</div></div>
<div class="a tile" style="left:725px;top:287px"><div class="a mu"><svg class="a" style="left:2.500px;top:2.500px" width="10" height="10" viewBox="0 0 24 24"><path fill="#fff" d="M19 11h-1.700c0 .74-.16 1.430-.43 2.050l1.230 1.230c.56-.98.9-2.090.9-3.280zm-4.020.17c0-.06.020-.11.020-.17V5c0-1.660-1.340-3-3-3S9 3.340 9 5v.18l5.980 5.990zM4.270 3L3 4.270l6.010 6.010V11c0 1.660 1.330 3 2.990 3 .22 0 .44-.03.65-.08l1.660 1.660c-.71.33-1.500.52-2.310.52-2.760 0-5.300-2.100-5.300-5.100H5c0 3.410 2.720 6.230 6 6.720V21h2v-3.280c.91-.13 1.770-.45 2.540-.9L19.730 21 21 19.730 4.270 3z"/></svg></div><div class="a av" style="top:23.500px;left:33.700px;background:radial-gradient(ellipse 10% 9% at 51% 33%,#bd9283 0,#b08577 70%,rgba(176,133,119,0) 100%),radial-gradient(ellipse 24% 38% at 50% 44%,#262129 0,#2e2832 80%,rgba(46,40,50,0) 100%),radial-gradient(ellipse 36% 11% at 50% 90%,#cda27d 0,#c59a78 70%,rgba(197,154,120,0) 100%),radial-gradient(ellipse 9% 18% at 10% 55%,#9fb88a 0,rgba(159,184,138,0) 100%),radial-gradient(ellipse 14% 12% at 22% 22%,#e3b9b9 0,rgba(227,185,185,0) 100%),radial-gradient(ellipse 12% 12% at 85% 35%,#a9a0a8 0,rgba(169,160,168,0) 100%),#d2cbcb"></div><div class="t nm">You</div></div>
<!-- ===== Controls ===== -->
<div class="a cb red" style="left:301.5px;top:391.2px"><svg class="a" style="left:6px;top:6px" width="12" height="12" viewBox="0 0 24 24"><path fill="#fff" d="M19 11h-1.700c0 .74-.16 1.430-.43 2.050l1.230 1.230c.56-.98.9-2.090.9-3.280zm-4.020.17c0-.06.020-.11.020-.17V5c0-1.660-1.340-3-3-3S9 3.340 9 5v.18l5.980 5.990zM4.270 3L3 4.270l6.010 6.010V11c0 1.660 1.330 3 2.990 3 .22 0 .44-.03.65-.08l1.660 1.660c-.71.33-1.500.52-2.310.52-2.760 0-5.300-2.100-5.300-5.100H5c0 3.410 2.720 6.230 6 6.720V21h2v-3.280c.91-.13 1.770-.45 2.540-.9L19.730 21 21 19.730 4.270 3z"/></svg></div>
<div class="a cb red" style="left:333.1px;top:391.2px"><svg class="a" style="left:6px;top:6px" width="12" height="12" viewBox="0 0 24 24"><path fill="#fff" d="M9.560 8l-2-2-4.150-4.140L2 3.270 4.730 6H4c-.55 0-1 .45-1 1v10c0 .55.45 1 1 1h12c.21 0 .39-.08.55-.18L19.730 21l1.410-1.410-8.860-8.860L9.560 8zM5 16V8h1.730l8 8H5zm10-8v2.610l6 6V6.500l-4 4V7c0-.55-.45-1-1-1h-5.610l2 2H15z"/></svg></div>
<div class="a cb" style="left:364.7px;top:391.2px"><svg class="a" style="left:4.70px;top:4.70px" width="14.6" height="14.6" viewBox="0 0 24 24"><path fill="#fff" d="M19 4H5c-1.110 0-2 .9-2 2v12c0 1.100.89 2 2 2h14c1.100 0 2-.9 2-2V6c0-1.100-.9-2-2-2zm0 14H5V6h14v12zM7 15h3c.55 0 1-.45 1-1v-1H9.500v.5h-2v-3h2v.5H11v-1c0-.55-.45-1-1-1H7c-.55 0-1 .45-1 1v4c0 .55.45 1 1 1zm7 0h3c.55 0 1-.45 1-1v-1h-1.500v.5h-2v-3h2v.5H18v-1c0-.55-.45-1-1-1h-3c-.55 0-1 .45-1 1v4c0 .55.45 1 1 1z"/></svg></div>
<div class="a cb" style="left:396.4px;top:391.2px"><svg class="a" style="left:4.80px;top:4.80px" width="14.4" height="14.4" viewBox="0 0 24 24"><path fill="#fff" d="M21 7c0-1.380-1.120-2.500-2.500-2.500-.17 0-.34.020-.5.050V4c0-1.380-1.120-2.500-2.500-2.500-.23 0-.46.030-.67.090C14.460.66 13.560 0 12.500 0c-1.230 0-2.250.89-2.460 2.060C9.870 2.020 9.690 2 9.500 2 8.120 2 7 3.120 7 4.500v5.890c-.34-.31-.76-.54-1.220-.66L5.010 9.520c-.83-.23-1.700.09-2.190.83-.38.570-.4 1.310-.15 1.950l2.560 6.430C6.490 21.910 9.570 24 13 24c4.420 0 8-3.580 8-8V7zm-2 9c0 3.310-2.690 6-6 6-2.610 0-4.950-1.590-5.910-4.010l-2.600-6.540.53.140c.46.120.83.460 1 .9L7 15h2V4.500c0-.28.220-.5.500-.5s.5.220.5.500V12h2V2.500c0-.28.220-.5.500-.5s.5.220.5.500V12h2V4c0-.28.220-.5.500-.5s.5.220.5.500v8h2V7c0-.28.220-.5.500-.5s.5.220.5.500v9z"/></svg></div>
<div class="a cb" style="left:427.7px;top:391.2px"><svg class="a" style="left:4.35px;top:5.70px" width="15.3" height="12.6" preserveAspectRatio="none" viewBox="0 0 24 24"><path fill="#fff" d="M21 3H3c-1.110 0-2 .89-2 2v14c0 1.110.89 2 2 2h18c1.110 0 2-.89 2-2V5c0-1.110-.89-2-2-2zm0 16.020H3V4.980h18v14.040zM10 12H8l4-4 4 4h-2v4h-4v-4z"/></svg></div>
<div class="a cb" style="left:459.3px;top:391.2px"><svg class="a" style="left:4.00px;top:4.00px" width="16" height="16" viewBox="0 0 24 24"><path fill="#fff" d="M12 8c1.100 0 2-.9 2-2s-.9-2-2-2-2 .9-2 2 .9 2 2 2zm0 2c-1.100 0-2 .9-2 2s.9 2 2 2 2-.9 2-2-.9-2-2-2zm0 6c-1.100 0-2 .9-2 2s.9 2 2 2 2-.9 2-2-.9-2-2-2z"/></svg></div>
<div class="a red" style="left:491.2px;top:391.2px;width:33px;height:24px;border-radius:12px"><svg class="a" style="left:9px;top:4.700px" width="15" height="15" viewBox="0 0 24 24"><path fill="#fff" d="M12 9c-1.600 0-3.150.25-4.600.72v3.100c0 .39-.23.74-.56.9-.98.49-1.870 1.120-2.660 1.850-.18.18-.43.28-.7.28-.28 0-.53-.11-.71-.29L.29 13.080c-.18-.17-.29-.42-.29-.7 0-.28.11-.53.29-.71C3.340 8.780 7.460 7 12 7s8.660 1.780 11.710 4.670c.18.18.29.43.29.71 0 .28-.11.53-.29.71l-2.480 2.480c-.18.18-.43.29-.71.29-.27 0-.52-.11-.7-.28-.79-.74-1.690-1.360-2.670-1.850-.33-.16-.56-.5-.56-.9v-3.100C15.150 9.250 13.600 9 12 9z"/></svg></div>
<div class="t" style="left:11.5px;top:398.7px;font-size:9.3px;font-weight:bold">1:06 PM</div>
<div class="a" style="left:54px;top:397px;width:1px;height:12px;background:#33353a"></div>
<div class="t" style="left:62.5px;top:398.7px;font-size:9.3px;font-weight:bold;letter-spacing:0.45px">hsf-tieb-ixm</div>
<svg class="a" style="left:681.0px;top:395.9px" width="13.5" height="13.5" viewBox="0 0 24 24"><path fill="#fff" d="M11 7h2v2h-2zm0 4h2v6h-2zm1-9C6.480 2 2 6.480 2 12s4.480 10 10 10 10-4.480 10-10S17.520 2 12 2zm0 18c-4.410 0-8-3.590-8-8s3.590-8 8-8 8 3.590 8 8-3.590 8-8 8z"/></svg>
<svg class="a" style="left:710.2px;top:395.9px" width="13.5" height="13.5" viewBox="0 0 24 24"><path fill="#fff" d="M9 13.750c-2.340 0-7 1.170-7 3.500V19h14v-1.750c0-2.330-4.660-3.500-7-3.500zM4.340 17c.84-.58 2.870-1.250 4.660-1.250s3.820.67 4.660 1.250H4.340zM9 12c1.930 0 3.500-1.570 3.500-3.500S10.930 5 9 5 5.500 6.570 5.500 8.500 7.070 12 9 12zm0-5c.83 0 1.500.67 1.500 1.500S9.830 10 9 10s-1.500-.67-1.500-1.500S8.170 7 9 7zm7.040 6.810c1.160.84 1.960 1.960 1.960 3.440V19h4v-1.750c0-2.020-3.500-3.170-5.960-3.440zM15 12c1.930 0 3.500-1.570 3.500-3.500S16.930 5 15 5c-.54 0-1.040.13-1.500.35.630.89 1 1.980 1 3.150s-.37 2.260-1 3.150c.46.220.96.35 1.500.35z"/></svg>
<svg class="a" style="left:739.5px;top:395.9px" width="13.5" height="13.5" viewBox="0 0 24 24"><path fill="#fff" d="M4 4h16v12H5.170L4 17.170V4m0-2c-1.100 0-1.990.9-1.990 2L2 22l4-4h14c1.100 0 2-.9 2-2V4c0-1.100-.9-2-2-2H4zm2 10h8v2H6v-2zm0-3h12v2H6V9zm0-3h12v2H6V6z"/></svg>
<svg class="a" style="left:768.5px;top:395.9px" width="13.5" height="13.5" viewBox="0 0 24 24" fill="none" stroke="#fff" stroke-width="2"><path d="M12 3.500L7.500 11h9z"/><rect x="4" y="14.500" width="6.500" height="6.500"/><circle cx="17.500" cy="17.750" r="3.250"/></svg>
<svg class="a" style="left:797.6px;top:395.9px" width="13.5" height="13.5" viewBox="0 0 24 24"><path fill="none" stroke="#fff" stroke-width="2" d="M12 2.100L4 5.650V11c0 5.050 3.400 9.750 8 10.950 4.600-1.200 8-5.900 8-10.950V5.650z"/><rect x="8.500" y="10.500" width="7" height="5.500" rx="1" fill="#fff"/><path fill="none" stroke="#fff" stroke-width="1.500" d="M10 10.500V9a2 2 0 0 1 4 0v1.500"/></svg>
<div class="a" style="left:718.5px;top:386.5px;width:11px;height:11px;border-radius:50%;background:#5f6368;text-align:center;font-size:5.5px;line-height:11px;font-weight:bold;color:#e8eaed">41</div>
<!-- ===== Taskbar ===== -->
<div class="a" id="taskbar"></div>
<div class="a" id="search"></div>
<div class="a" style="left:10px;top:433.800px;width:4px;height:4.300px;background:#fff;transform:skewY(-6deg)"></div><div class="a" style="left:14.700px;top:433.300px;width:4.800px;height:4.600px;background:#fff;transform:skewY(-6deg)"></div><div class="a" style="left:10px;top:438.800px;width:4px;height:4.300px;background:#fff;transform:skewY(6deg)"></div><div class="a" style="left:14.700px;top:438.800px;width:4.800px;height:4.600px;background:#fff;transform:skewY(6deg)"></div>
<svg class="a" style="left:36px;top:433.500px" width="10" height="10" viewBox="0 0 20 20"><circle cx="12.500" cy="7.500" r="5.300" fill="none" stroke="#222" stroke-width="1.600"/><path d="M8.500 11.500L1.500 18.500" stroke="#222" stroke-width="1.800"/></svg>
<div class="t" style="left:53.900px;top:433.600px;font-size:9px;letter-spacing:-0.140px;color:#2b2b2b">Type here to search</div>
<div class="a" style="left:248.300px;top:434px;width:8.400px;height:8.400px;border-radius:50%;border:1.300px solid #fff"></div>
<div class="a" style="left:277px;top:434.500px;width:6.500px;height:7.500px;border:1px solid #fff"></div><div class="a" style="left:274.500px;top:436px;width:1px;height:4.500px;background:#fff"></div><div class="a" style="left:285px;top:436px;width:1px;height:4.500px;background:#fff"></div><div class="a" style="left:285px;top:434.500px;width:1.500px;height:1px;background:#fff"></div><div class="a" style="left:285px;top:441px;width:1.500px;height:1px;background:#fff"></div>
<div class="a" style="left:306.40px;top:431.70px;width:5.2px;height:5.2px;background:#fff;transform:scaleY(0.680) rotate(45deg)"></div><div class="a" style="left:313.60px;top:431.70px;width:5.2px;height:5.2px;background:#fff;transform:scaleY(0.680) rotate(45deg)"></div><div class="a" style="left:306.40px;top:436.60px;width:5.2px;height:5.2px;background:#fff;transform:scaleY(0.680) rotate(45deg)"></div><div class="a" style="left:313.60px;top:436.60px;width:5.2px;height:5.2px;background:#fff;transform:scaleY(0.680) rotate(45deg)"></div><div class="a" style="left:310.40px;top:440.80px;width:4.4px;height:4.4px;background:#fff;transform:scaleY(0.680) rotate(45deg)"></div>
<div class="a" style="left:333.600px;top:431px;width:14px;height:14px;border-radius:50%;background:conic-gradient(from 200deg,#0c59a4,#1b9de2 25%,#3ccf6d 45%,#35c1f1 60%,#0f6cbd 80%,#0c59a4)"><div class="a" style="left:4.500px;top:5px;width:8px;height:6px;border-radius:50%;background:#1d1a1b"></div><div class="a" style="left:3px;top:3.500px;width:8px;height:5px;border-radius:50%;background:#2fb7e8"></div></div>
<div class="a" style="left:362.500px;top:433px;width:6px;height:3px;border-radius:1px 1px 0 0;background:#e0a52c"></div><div class="a" style="left:362.500px;top:434.500px;width:13.500px;height:9.500px;border-radius:1px;background:#f6c544"></div><div class="a" style="left:366px;top:439.500px;width:6.500px;height:4.500px;background:#5aa7e0"></div>
<div class="a" style="left:384.300px;top:425px;width:27.700px;height:24px;background:#474648"></div><div class="a" style="left:384.300px;top:448.800px;width:27.700px;height:1.200px;background:#8ab4e8"></div>
<div class="a" style="left:390.600px;top:431px;width:14px;height:14px;border-radius:50%;background:conic-gradient(from 30deg,#fbc116 0 120deg,#2da94f 120deg 240deg,#e33b2e 240deg 360deg)"><div class="a" style="left:3.700px;top:3.700px;width:6.600px;height:6.600px;border-radius:50%;background:#fff"></div><div class="a" style="left:4.700px;top:4.700px;width:4.600px;height:4.600px;border-radius:50%;background:#4285f4"></div></div>
<div class="a" style="left:419px;top:433.300px;width:14.500px;height:10px;background:#39a4ee;overflow:hidden"><div class="a" style="left:0;top:0;width:0;height:0;border-left:7.250px solid transparent;border-right:7.250px solid transparent;border-top:5.500px solid #0f62bd"></div><div class="a" style="left:0;top:4.500px;width:0;height:0;border-left:7.250px solid transparent;border-right:7.250px solid transparent;border-bottom:5.500px solid #7fd0fb"></div></div>
<svg class="a" style="left:448.500px;top:431.500px" width="13" height="13" viewBox="0 0 24 24"><rect x="1" y="1" width="22" height="22" rx="3" fill="#102a52"/><path d="M12 4.500l6 2.300v4.600c0 3.700-2.500 6.900-6 8-3.500-1.100-6-4.300-6-8V6.800z" fill="none" stroke="#35a7ff" stroke-width="2"/><path d="M9 12l2.200 2.200L15.500 10" fill="none" stroke="#35a7ff" stroke-width="1.800"/></svg>
<div class="a" style="left:477.200px;top:431.500px;width:13px;height:13px;background:#f8d41c;overflow:hidden"><div class="a" style="left:8px;top:8px;width:0;height:0;border-left:5px solid #4a4536;border-bottom:5px solid transparent"></div><div class="a" style="left:8px;top:8px;width:0;height:0;border-right:5px solid #1f1b1b;border-top:5px solid transparent"></div></div>
<div class="a" style="left:508px;top:432px;width:10.500px;height:12px;border-radius:1px;background:#e9eef7"><div class="a" style="left:5px;top:2px;width:4px;height:1px;background:#2b579a"></div><div class="a" style="left:5px;top:4.500px;width:4px;height:1px;background:#2b579a"></div><div class="a" style="left:5px;top:7px;width:4px;height:1px;background:#2b579a"></div></div><div class="a" style="left:505px;top:434px;width:8px;height:8px;background:#2b579a;border-radius:0.800px;text-align:center;font-size:6.500px;line-height:8px;font-weight:bold">W</div>
<div class="a" style="left:471.800px;top:448.800px;width:23px;height:1.200px;background:#76859a"></div><div class="a" style="left:500.400px;top:448.800px;width:23px;height:1.200px;background:#76859a"></div>
<div class="a" style="left:536.500px;top:432px;width:10.500px;height:12px;border-radius:1px;background:#2f8f5b"><div class="a" style="left:5px;top:2px;width:4px;height:1px;background:#d5eadd"></div><div class="a" style="left:5px;top:4.500px;width:4px;height:1px;background:#d5eadd"></div><div class="a" style="left:5px;top:7px;width:4px;height:1px;background:#d5eadd"></div></div><div class="a" style="left:533.500px;top:434px;width:8px;height:8px;background:#217346;border-radius:0.800px;text-align:center;font-size:6.500px;line-height:8px;font-weight:bold">X</div>
<div class="a" style="left:529px;top:448.800px;width:23px;height:1.200px;background:#76859a"></div>
<div class="a" style="left:562.500px;top:431.500px;width:13px;height:13px;border-radius:50%;background:#2a8fe8;border:1.200px solid #cfe6fb;text-align:center;font-size:8.500px;line-height:10.600px;font-weight:bold">?</div>
<div class="a" style="left:596.500px;top:433.500px;width:7px;height:7px;border-radius:50%;background:#f6b93a"></div><div class="a" style="left:593.500px;top:437px;width:11px;height:5.500px;border-radius:3px;background:#dfe9f5"></div><div class="a" style="left:595.500px;top:435px;width:5.500px;height:5.500px;border-radius:50%;background:#dfe9f5"></div>
<div class="t" style="left:612.500px;top:434px;font-size:7.700px;color:#fff">29°C</div>
<svg class="a" style="left:643px;top:435px" width="8" height="5" viewBox="0 0 16 10"><path d="M1.500 8.500L8 2l6.500 6.500" fill="none" stroke="#fff" stroke-width="1.800"/></svg>
<div class="a" style="left:662.500px;top:433.500px;width:9px;height:8px;border:1px solid #fff"></div><div class="a" style="left:665px;top:436px;width:4px;height:3px;background:#fff"></div><div class="a" style="left:668.500px;top:440px;width:4px;height:4px;border-radius:50%;background:#f7931e"></div>
<svg class="a" style="left:680px;top:432.500px" width="11" height="11" viewBox="0 0 24 24"><path fill="none" stroke="#fff" stroke-width="1.600" d="M3 9.500v5h3.500L11 19V5L6.500 9.500z"/><path fill="none" stroke="#fff" stroke-width="1.500" d="M14 9c1.300 1.700 1.300 4.300 0 6M16.800 6.500c2.600 3.200 2.600 7.800 0 11M19.500 4.500c3.500 4.400 3.500 10.600 0 15"/></svg>
<div class="a" style="left:700px;top:435.500px;width:9.500px;height:5px;border:1px solid #fff"></div><div class="a" style="left:699px;top:437px;width:1px;height:2px;background:#fff"></div><div class="a" style="left:701px;top:436.500px;width:2.500px;height:3px;background:#fff"></div>
<svg class="a" style="left:720.500px;top:433px" width="10" height="10" viewBox="0 0 20 20"><path fill="none" stroke="#fff" stroke-width="1.600" d="M18 3.500C10 3.500 3.500 10 3.500 18M18 8c-5.500 0-10 4.500-10 10M18 12.500c-3 0-5.500 2.500-5.500 5.500"/><circle cx="16.800" cy="16.800" r="1.500" fill="#fff"/></svg>
<svg class="a" style="left:741px;top:432.500px" width="11" height="11" viewBox="0 0 22 22"><path fill="none" stroke="#fff" stroke-width="1.500" d="M3 19l1-4L15 4l3 3L7 18zM13 6l3 3M2 14c3-3 5 1 7-1M14 17c2 1 4-2 6 0"/></svg>
<div class="t" style="left:756px;width:44px;text-align:center;top:429.500px;font-size:6.400px;color:#fff">1:06 PM</div>
<div class="t" style="left:756px;width:44px;text-align:center;top:440px;font-size:6.400px;color:#fff">7/27/2021</div>
<svg class="a" style="left:805px;top:432.500px" width="10.500" height="10.500" viewBox="0 0 21 21"><path fill="#fff" d="M1.500 2h18v13H9l-4 4v-4H1.500z"/><path stroke="#1d1a1b" stroke-width="1.300" d="M4.500 6h12M4.500 9h12M4.500 12h8"/></svg>
<div class="a" style="left:810.500px;top:438.500px;width:8px;height:8px;border-radius:50%;background:#1d1a1b;border:0.800px solid #fff;text-align:center;font-size:5.600px;line-height:6.400px;color:#fff">2</div>
<div class="a" style="left:826px;top:428px;width:1px;height:20px;background:#6a6768"></div>
</body>
</html>
